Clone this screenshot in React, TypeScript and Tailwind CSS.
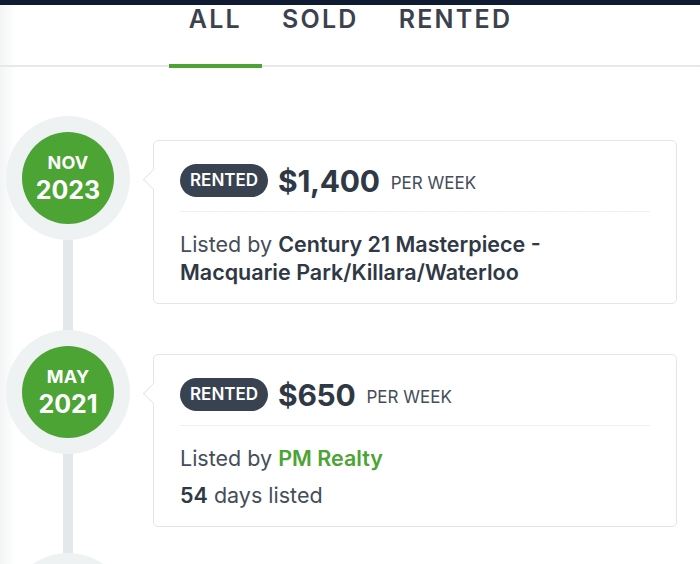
import React from 'react';

type Entry = {
  month: string;
  year: string;
  price: string;
  agent: string;
  agentLink?: boolean;
  days?: number;
};

const ENTRIES: Entry[] = [
  { month: 'NOV', year: '2023', price: '$1,400', agent: 'Century 21 Masterpiece - Macquarie Park/Killara/Waterloo' },
  { month: 'MAY', year: '2021', price: '$650', agent: 'PM Realty', agentLink: true, days: 54 },
];

const TABS = ['ALL', 'SOLD', 'RENTED'];

function DateBubble({ month, year }: { month: string; year: string }) {
  return (
    <div className="w-[124px] h-[124px] rounded-full bg-[#eef2f2] flex items-center justify-center shrink-0">
      <div className="w-[92px] h-[92px] rounded-full bg-[#4ca434] flex flex-col items-center justify-center text-white font-bold leading-none">
        <span className="text-[18px] tracking-[0.01em]">{month}</span>
        <span className="text-[25px] mt-[6px]">{year}</span>
      </div>
    </div>
  );
}

function HistoryCard({ entry }: { entry: Entry }) {
  return (
    <div className="relative bg-white border border-[#e3e5e7] rounded-[5px] px-[26px] pt-[23px] pb-[17px]">
      <div className="absolute left-[-8px] top-[31px] w-[15px] h-[15px] rotate-45 bg-white border-l border-b border-[#e3e5e7]" />
      <div className="flex items-center h-[33px]">
        <span className="h-[33px] px-[10px] rounded-full bg-[#394251] text-white text-[17px] font-semibold flex items-center">
          RENTED
        </span>
        <span className="ml-[10px] text-[30px] leading-none font-bold text-[#2f3845] tracking-[-0.01em]">{entry.price}</span>
        <span className="ml-[11px] mt-[5px] text-[17px] leading-none text-[#454d5a]">PER WEEK</span>
      </div>
      <div className="mt-[14px] h-px bg-[#eeeff0]" />
      <div className="mt-[18px] text-[21.5px] leading-[28px] text-[#454d5a]">
        Listed by{' '}
        <span className={entry.agentLink ? 'font-semibold text-[#4ca434]' : 'font-semibold text-[#2f3845]'}>
          {entry.agent}
        </span>
      </div>
      {entry.days !== undefined && (
        <div className="mt-[9px] text-[21.5px] leading-[28px] text-[#454d5a]">
          <span className="font-semibold text-[#2f3845]">{entry.days}</span> days listed
        </div>
      )}
    </div>
  );
}

export default function App() {
  return (
    <div
      className="w-[700px] h-[564px] overflow-hidden bg-[linear-gradient(to_right,#f3f4f5,#ffffff_16px)]"
      style={{ fontFamily: 'Inter, "Noto Sans", sans-serif' }}
    >
      <div className="h-[5px] bg-[#0f1a33]" />
      <div className="relative flex justify-center pl-[1px] border-b-2 border-[#e6e8e9] h-[62px]">
        {TABS.map((t, i) => (
          <div
            key={t}
            className={`relative px-5 text-[25px] font-semibold tracking-[0.09em] text-[#3b414d] leading-[28px] ${
              i === 0 ? 'after:absolute after:left-0 after:right-0 after:bottom-[-3px] after:h-[4px] after:bg-[#4ca434]' : ''
            }`}
          >
            {t}
          </div>
        ))}
      </div>

      <div className="pt-[49px]">
        {ENTRIES.map((e, i) => (
          <div key={i} className="flex">
            <div className="w-[132px] pl-[4px] flex flex-col items-center shrink-0">
              <DateBubble month={e.month} year={e.year} />
              <div className="w-[10px] flex-1 bg-[#e3e8ea]" />
            </div>
            <div className="ml-[21px] w-[524px] pt-[24px] pb-[26px]">
              <HistoryCard entry={e} />
            </div>
          </div>
        ))}
        <div className="flex">
          <div className="w-[132px] pl-[4px] flex flex-col items-center shrink-0">
            <div className="w-[124px] h-[124px] rounded-full bg-[#eef2f2]" />
          </div>
        </div>
      </div>
    </div>
  );
}
